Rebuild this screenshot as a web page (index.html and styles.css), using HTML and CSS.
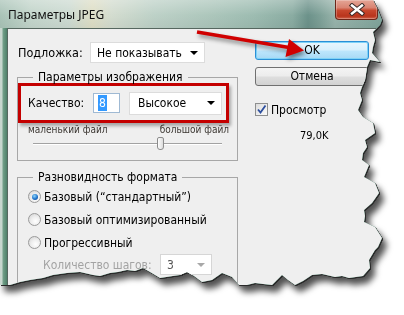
FILE: index.html
```html
<!DOCTYPE html>
<html lang="ru">
<head>
<meta charset="utf-8">
<title>Параметры JPEG</title>
<link rel="stylesheet" href="styles.css">
</head>
<body>
<div class="sheet">
  <div class="paper">
    <div class="titlebar">
      <span class="title">Параметры JPEG</span>
      <span class="close">
        <svg width="18" height="13" viewBox="0 0 18 13"><path d="M4 2.5 L14 10.5 M14 2.5 L4 10.5" stroke="#3b2a28" stroke-width="4.4" stroke-linecap="square"/><path d="M4 2.5 L14 10.5 M14 2.5 L4 10.5" stroke="#ffffff" stroke-width="2.4" stroke-linecap="square"/></svg>
      </span>
    </div>
    <div class="frame">
      <div class="client">
        <div class="left">
          <div class="matte">
            <span class="matte-label">Подложка:</span>
            <div class="select wide"><span>Не показывать</span><i class="caret"></i></div>
          </div>
          <fieldset class="group g1">
            <legend>Параметры изображения</legend>
            <div class="mark">
              <span class="q-label">Качество:</span>
              <div class="field"><span class="sel">8</span></div>
              <div class="select quality"><span>Высокое</span><i class="caret"></i></div>
            </div>
            <div class="scale"><span>маленький файл</span><span>большой файл</span></div>
            <div class="slider"><div class="track"></div><div class="thumb"></div></div>
          </fieldset>
          <fieldset class="group g2">
            <legend>Разновидность формата</legend>
            <div class="radio-row"><span class="radio on"></span><span>Базовый (“стандартный”)</span></div>
            <div class="radio-row"><span class="radio"></span><span>Базовый оптимизированный</span></div>
            <div class="radio-row"><span class="radio"></span><span>Прогрессивный</span></div>
            <div class="steps">
              <span class="steps-label">Количество шагов:</span>
              <div class="select small"><span>3</span><i class="caret dim"></i></div>
            </div>
          </fieldset>
        </div>
        <div class="right">
          <div class="btn default">OK</div>
          <div class="btn">Отмена</div>
          <div class="preview">
            <span class="check"><svg width="11" height="11" viewBox="0 0 11 11"><path d="M2 5.5 L4.5 8.5 L9.5 1.5" fill="none" stroke="#2d4f9e" stroke-width="1.8"/></svg></span>
            <span>Просмотр</span>
          </div>
          <div class="size">79,0K</div>
        </div>
      </div>
    </div>
  </div>
</div>
<svg class="annot" width="404" height="315" viewBox="0 0 404 315">
  <line x1="197" y1="32" x2="289" y2="47.5" stroke="#d00000" stroke-width="3.4"/>
  <polygon points="304,50.5 285.5,57 289,39" fill="#d00000"/>
</svg>
</body>
</html>
```
FILE: styles.css
```css
html, body {
  margin: 0;
  padding: 0;
}
body {
  width: 404px;
  height: 315px;
  overflow: hidden;
  background: #ffffff;
  position: relative;
  font-family: "DejaVu Sans Condensed", "DejaVu Sans", sans-serif;
  font-stretch: condensed;
  font-size: 12px;
  color: #000;
}
.sheet {
  width: 385px;
  height: 292px;
  filter: drop-shadow(1px 1px 0 #2a2a2a) drop-shadow(4px 6px 3px rgba(0,0,0,0.68));
}
.paper {
  width: 385px;
  height: 292px;
  display: flex;
  flex-direction: column;
  background: #7ea39a;
  overflow: hidden;
  clip-path: polygon(0 0, 373px 0, 376px 6px, 378px 10px, 382px 20px, 380px 25px, 377px 28px, 373px 32px, 375px 40px, 373px 47px, 372px 53px, 380px 62px, 370px 60px, 367px 67px, 366px 74px, 365px 80px, 362px 87px, 360px 93px, 362px 100px, 358px 110px, 363px 117px, 373px 123px, 375px 133px, 365px 140px, 367px 147px, 363px 153px, 362px 160px, 369px 165px, 364px 177px, 375px 183px, 379px 193px, 372px 203px, 364px 210px, 365px 216px, 364px 222px, 375px 227px, 382px 238px, 378px 247px, 375px 250px, 369px 260px, 370px 268px, 363px 276px, 349px 278px, 342px 276px, 335px 277px, 322px 274px, 312px 275px, 303px 281px, 295px 285px, 288px 280px, 282px 275px, 277px 280px, 272px 285px, 263px 284px, 255px 283px, 247px 285px, 239px 285px, 232px 277px, 222px 273px, 212px 280px, 202px 282px, 194px 276px, 187px 272px, 180px 275px, 173px 276px, 160px 278px, 150px 272px, 143px 268px, 135px 271px, 127px 270px, 118px 272px, 110px 273px, 100px 276px, 93px 275px, 80px 272px, 67px 273px, 53px 275px, 43px 278px, 30px 280px, 20px 282px, 10px 285px, 0 285px);
}
.titlebar {
  height: 28px;
  flex: none;
  display: flex;
  align-items: flex-start;
  justify-content: space-between;
  padding-left: 8px;
  padding-right: 7px;
  background:
    linear-gradient(to bottom, rgba(255,255,255,0.28), rgba(255,255,255,0) 55%, rgba(0,0,0,0.04)),
    linear-gradient(to right, #a9c3b7 0%, #c3d5cb 8%, #cddbd2 18%, #dedec6 24%, #d3dccf 29%, #bdd1c7 40%, #acc6bb 55%, #9dbcb1 66%, #8aaca2 76%, #6c928a 80%, #7c9f96 83%, #98b4ab 87%, #7ea39a 100%);
}
.title {
  font-family: "Noto Sans", "Open Sans", sans-serif;
  font-stretch: normal;
  font-size: 12px;
  line-height: 30px;
  color: #111;
}
.close {
  width: 43px;
  height: 20px;
  box-sizing: border-box;
  display: flex;
  align-items: center;
  justify-content: center;
  border: 1px solid #6b2619;
  border-top: 0;
  border-radius: 0 0 4px 4px;
  background: linear-gradient(to bottom, #e4a596 0%, #d98472 40%, #c7472d 55%, #b8341c 85%, #d0654c 100%);
  box-shadow: inset 0 0 0 1px rgba(255,255,255,0.25);
}
.frame {
  flex: 1;
  display: flex;
  padding-left: 7px;
  background: linear-gradient(to right, #c7d6ce 0, #c7d6ce 2px, #73a089 3px, #4e8069 7px);
}
.client {
  flex: 1;
  display: flex;
  align-items: flex-start;
  background: #efefef;
  border-left: 1px solid #56675f;
  border-top: 1px solid #56675f;
}
.left {
  width: 230px;
  flex: none;
  box-sizing: border-box;
  padding-left: 9px;
}
.matte {
  margin-top: 13px;
  height: 21px;
  display: flex;
  align-items: center;
}
.matte-label {
  width: 72px;
  padding-left: 1px;
  flex: none;
  font-size: 12.5px;
}
.select {
  box-sizing: border-box;
  background: #fff;
  border: 1px solid #dcdcdc;
  display: flex;
  align-items: center;
  justify-content: space-between;
  padding: 0 6px 0 6px;
  flex: none;
}
.wide {
  width: 115px;
  height: 21px;
}
.caret {
  width: 0;
  height: 0;
  border-left: 4px solid transparent;
  border-right: 4px solid transparent;
  border-top: 4px solid #000;
}
.caret.dim {
  border-top-color: #a8a8a8;
}
.group {
  margin: 7px 0 0 0;
  width: 221px;
  min-width: 0;
  box-sizing: border-box;
  border: 1px solid #a7a7a7;
  padding: 0 8px 8px 10px;
}
.group legend {
  line-height: 14px;
  padding: 0 5px;
  margin-left: 5px;
}
.mark {
  margin: -1px 0 0 -10px;
  width: 211px;
  height: 40px;
  box-sizing: border-box;
  border: 3px solid #c40000;
  padding-left: 7px;
  display: flex;
  align-items: center;
  box-shadow: 2px 3px 3px rgba(0,0,0,0.3);
}
.q-label {
  width: 65px;
  flex: none;
}
.field {
  width: 27px;
  height: 20px;
  box-sizing: border-box;
  background: #fff;
  border: 1px solid #9fb9d3;
  display: flex;
  align-items: center;
  padding-left: 4px;
  flex: none;
}
.sel {
  background: #3399ff;
  color: #fff;
  line-height: 16px;
  padding: 0 1px;
}
.quality {
  margin-left: 9px;
  width: 93px;
  height: 23px;
  padding-left: 8px;
}
.scale {
  margin-top: 1px;
  height: 12px;
  line-height: 12px;
  font-size: 10px;
  color: #3a3530;
  display: flex;
  justify-content: space-between;
}
.slider {
  position: relative;
  height: 16px;
  margin: 0 7px 0 5px;
}
.track {
  position: absolute;
  left: 0;
  right: 0;
  top: 7px;
  height: 1px;
  background: #a2a2a2;
  border-bottom: 1px solid #ffffff;
}
.thumb {
  position: absolute;
  left: 124px;
  top: 1px;
  width: 7px;
  height: 13px;
  box-sizing: border-box;
  border: 1px solid #8c8c8c;
  border-radius: 2px 2px 3px 3px;
  background: linear-gradient(to right, #fdfdfd, #dcdcdc);
}
.g2 {
  margin-top: 9px;
  padding-bottom: 20px;
}
.radio-row {
  height: 23px;
  display: flex;
  align-items: center;
  gap: 3px;
}
.radio-row:first-of-type {
  margin-top: 1px;
}
.radio {
  width: 13px;
  height: 13px;
  box-sizing: border-box;
  border-radius: 50%;
  border: 1px solid #9a9a9a;
  background: radial-gradient(circle at 60% 65%, #ffffff 0, #eeeeee 45%, #cfcfcf 100%);
  display: flex;
  align-items: center;
  justify-content: center;
  flex: none;
}
.radio.on::after {
  content: "";
  width: 6px;
  height: 6px;
  border-radius: 50%;
  background: radial-gradient(circle at 40% 35%, #8fd6fb 0, #1f74cc 55%, #0b347a 100%);
}
.steps {
  margin-left: 15px;
  height: 21px;
  display: flex;
  align-items: center;
}
.steps-label {
  width: 117px;
  flex: none;
  color: #a3a3a3;
}
.small {
  width: 52px;
  height: 21px;
  padding-left: 6px;
  color: #555;
  border-color: #d6d6d6;
}
.right {
  margin-left: 17px;
  width: 114px;
  padding-top: 12px;
  display: flex;
  flex-direction: column;
}
.btn {
  height: 19px;
  box-sizing: border-box;
  border: 1px solid #707070;
  border-radius: 3px;
  background: linear-gradient(to bottom, #f4f4f4 0%, #ececec 48%, #dedede 52%, #d2d2d2 100%);
  display: flex;
  align-items: center;
  justify-content: center;
  line-height: 17px;
}
.btn + .btn {
  margin-top: 7px;
}
.btn.default {
  border-color: #2b8fd6;
  background: linear-gradient(to bottom, #eaf6fd 0%, #d9f0fc 48%, #bde6fd 52%, #a7d9f5 100%);
  box-shadow: inset 0 0 0 1px #7fd2f7;
}
.preview {
  margin-top: 15px;
  height: 17px;
  display: flex;
  align-items: center;
  gap: 3px;
}
.check {
  width: 13px;
  height: 13px;
  box-sizing: border-box;
  border: 1px solid #8e8f8f;
  background: linear-gradient(135deg, #dcdcdc, #fbfbfb);
  display: flex;
  align-items: center;
  justify-content: center;
  flex: none;
}
.size {
  margin-top: 12px;
  padding-left: 45px;
  font-size: 11px;
  line-height: 12px;
}
.annot {
  position: absolute;
  left: 0;
  top: 0;
  pointer-events: none;
  filter: drop-shadow(2px 3px 2px rgba(0,0,0,0.45));
}
```
